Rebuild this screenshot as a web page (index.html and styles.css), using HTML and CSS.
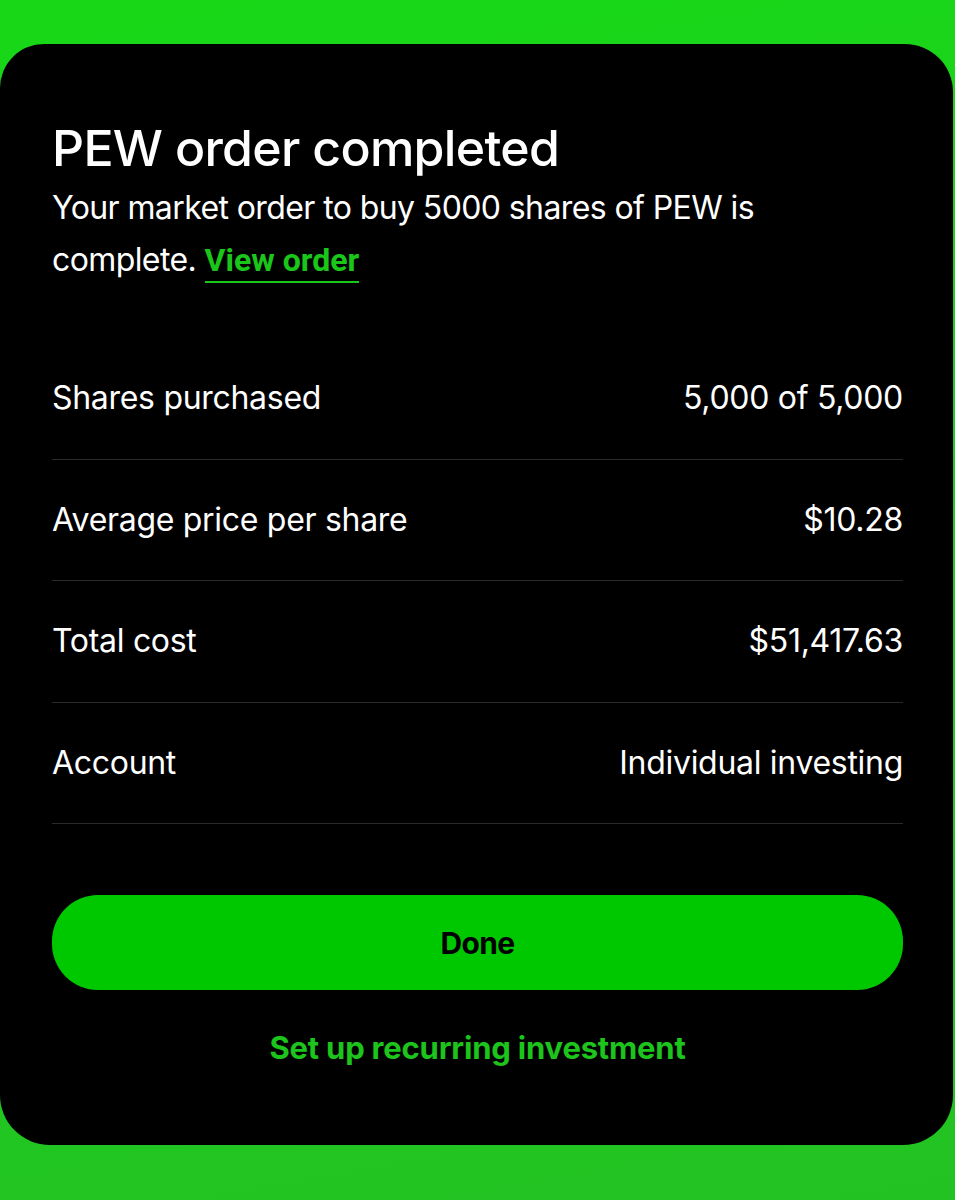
FILE: index.html
```html
<!DOCTYPE html>
<html lang="en">
<head>
<meta charset="utf-8">
<title>PEW order completed</title>
<link rel="stylesheet" href="styles.css">
</head>
<body>
<div class="page">
  <section class="card">
    <header class="intro">
      <h1 class="title">PEW order completed</h1>
      <p class="desc">Your market order to buy 5000 shares of PEW is complete. <a class="link" href="#">View order</a></p>
    </header>
    <dl class="details">
      <div class="row"><dt>Shares purchased</dt><dd>5,000 of 5,000</dd></div>
      <div class="row"><dt>Average price per share</dt><dd>$10.28</dd></div>
      <div class="row"><dt>Total cost</dt><dd>$51,417.63</dd></div>
      <div class="row"><dt>Account</dt><dd>Individual investing</dd></div>
    </dl>
    <button class="done" type="button">Done</button>
    <a class="recurring" href="#">Set up recurring investment</a>
  </section>
</div>
</body>
</html>
```

FILE: styles.css
```css
* { box-sizing: border-box; }
html, body { margin: 0; padding: 0; }
body {
  width: 955px;
  height: 1200px;
  overflow: hidden;
  background: linear-gradient(170deg, #17d817 0%, #1fcf1f 40%, #22c222 100%);
  font-family: "Inter", "Noto Sans", sans-serif;
  color: #ffffff;
}
.page {
  padding-top: 44px;
  padding-right: 2px;
}
.card {
  height: 1101px;
  background: #000000;
  border-radius: 44px 48px 50px 50px;
  padding: 74px 50px 0 52px;
  display: flex;
  flex-direction: column;
}
.title {
  margin: 0;
  font-size: 50px;
  line-height: 60px;
  font-weight: 500;
  letter-spacing: -0.7px;
}
.desc {
  margin: 4px 0 0 0;
  font-size: 32px;
  line-height: 52px;
  font-weight: 400;
  letter-spacing: -0.6px;
}
.link {
  display: inline-block;
  color: #19c619;
  font-family: "Roboto", "Inter", sans-serif;
  font-weight: 700;
  line-height: 34px;
  letter-spacing: 0;
  text-decoration: none;
  padding-bottom: 4px;
  border-bottom: 2px solid #19c619;
}
.details {
  margin: 52px 0 0 0;
}
.row {
  height: 121.5px;
  border-bottom: 1px solid #2a2a2a;
  display: flex;
  align-items: center;
  justify-content: space-between;
  font-size: 32px;
  letter-spacing: -0.3px;
  padding-bottom: 1px;
}
.row dt, .row dd { margin: 0; }
.done {
  margin-top: 71px;
  height: 95px;
  border: none;
  border-radius: 46px;
  background: #00c800;
  color: #000;
  font-family: "Inter", "Noto Sans", sans-serif;
  font-weight: 700;
  font-size: 30px;
  letter-spacing: -0.6px;
}
.recurring {
  margin-top: 38px;
  align-self: center;
  color: #1cc41c;
  font-weight: 700;
  font-size: 31px;
  line-height: 40px;
  letter-spacing: -0.2px;
  text-decoration: none;
}
```
